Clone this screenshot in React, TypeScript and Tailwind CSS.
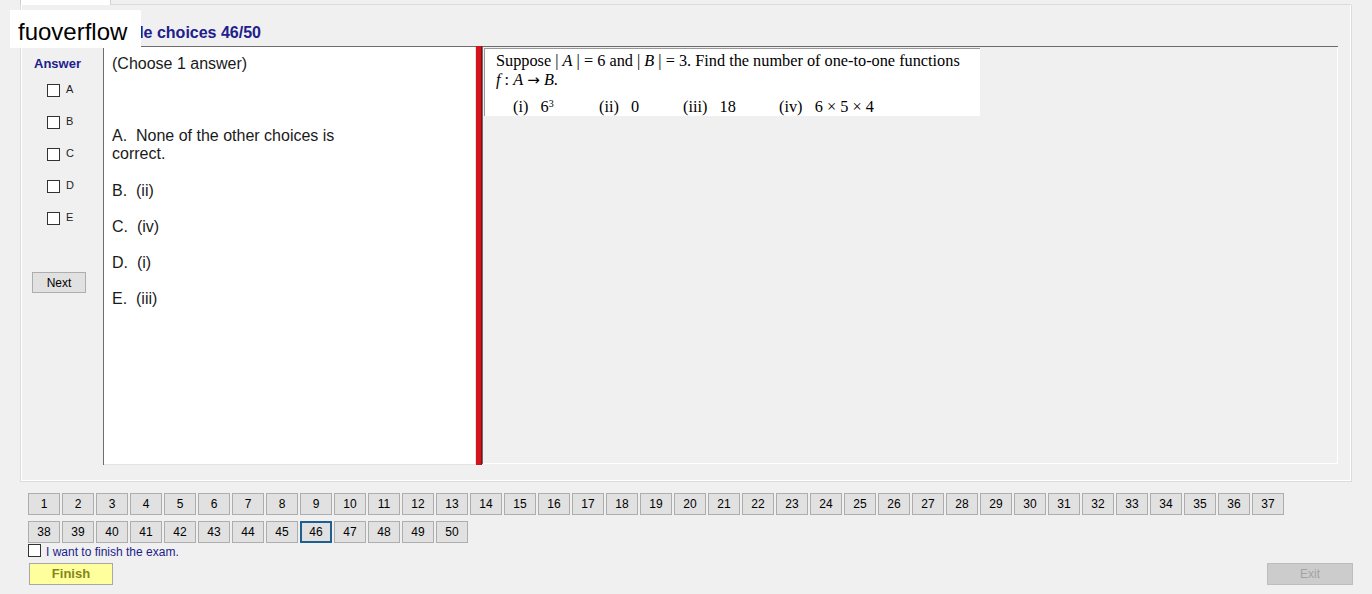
const choices = [
  { key: "A", text: "None of the other choices is correct." },
  { key: "B", text: "(ii)" },
  { key: "C", text: "(iv)" },
  { key: "D", text: "(i)" },
  { key: "E", text: "(iii)" },
];

const questions = Array.from({ length: 50 }, (_, i) => i + 1);
const current = 46;

function Box({ className = "" }: { className?: string }) {
  return (
    <span
      className={`inline-block h-[13px] w-[13px] shrink-0 border border-[#333333] bg-white ${className}`}
    />
  );
}

function NavButton({ n }: { n: number }) {
  const active = n === current;
  return (
    <button
      className={`flex h-[22px] w-[32px] items-center justify-center bg-[#e1e1e1] text-[12px] text-black ${
        active ? "border-2 border-[#1d5f8e]" : "border border-[#adadad]"
      }`}
    >
      {n}
    </button>
  );
}

function QuestionImage() {
  return (
    <div className="ml-[1px] mt-[1px] h-[68px] w-[496px] border-l border-t border-[#9a9a9a] bg-white pl-[11px] pt-[2px] font-['Liberation_Serif','Times_New_Roman',serif] text-[16.3px] leading-[19px] text-black">
      <div>
        Suppose | <i>A</i> | = 6 and | <i>B</i> | = 3. Find the number of one-to-one functions
      </div>
      <div>
        <i>f</i> : <i>A</i>{" "}
        <span className="font-['DejaVu_Sans',sans-serif] text-[15px]">→</span> <i>B</i>.
      </div>
      <div className="mt-[7px] flex pl-[17px]">
        <span className="w-[86px]">
          (i)&nbsp;&nbsp; 6<sup className="text-[10px]">3</sup>
        </span>
        <span className="w-[84px]">(ii)&nbsp;&nbsp; 0</span>
        <span className="w-[96px]">(iii)&nbsp;&nbsp; 18</span>
        <span>(iv)&nbsp;&nbsp; 6 × 5 × 4</span>
      </div>
    </div>
  );
}

export default function App() {
  return (
    <div className="relative flex h-[594px] w-[1372px] flex-col overflow-hidden bg-[#f0f0f0] font-['Liberation_Sans',Arial,sans-serif]">
      {/* tab strip */}
      <div className="flex h-[5px]">
        <div className="ml-[20px] h-full w-[91px] border-x border-[#d0d0d0] bg-white" />
        <div className="mt-auto h-[1px] w-[1240px] bg-[#dcdcdc]" />
      </div>

      {/* group box */}
      <div className="ml-[20px] flex h-[477px] w-[1332px] flex-col border border-t-0 border-[#dcdcdc] shadow-[inset_1px_0_0_#ffffff,inset_-1px_-1px_0_#ffffff]">
        <div className="h-[41px] pt-[19px]">
          <div className="w-[240px] text-right text-[16px] font-bold leading-[18px] text-[#20208c]">
            Multiple choices 46/50
          </div>
        </div>

        <div className="flex h-[419px]">
          {/* answer column */}
          <div className="flex w-[82px] flex-col">
            <div className="mt-[10px] pl-[13px] text-[13px] font-bold leading-[16px] text-[#20208c]">
              Answer
            </div>
            <div className="mt-[12px] flex flex-col gap-[19px] pl-[26px]">
              {choices.map(c => (
                <label key={c.key} className="flex items-center gap-[6px] text-[11px] leading-[13px] text-[#222222]">
                  <Box />
                  <span className="-mt-[3px]">{c.key}</span>
                </label>
              ))}
            </div>
            <button className="ml-[11px] mt-[47px] h-[21px] w-[54px] border border-[#adadad] bg-[#e1e1e1] text-[12px] text-black">
              Next
            </button>
          </div>

          {/* choices panel */}
          <div className="w-[373px] border-l border-t border-[#6d6d6d] bg-white pl-[8px] pt-[8px] text-[16px] leading-[18px] text-[#1a1a1a] shadow-[inset_-1px_-1px_0_#e3e3e3]">
            <div>(Choose 1 answer)</div>
            <div className="mt-[54px] flex flex-col gap-[18px]">
              {choices.map(c => (
                <div key={c.key} className="w-[240px] first:mb-[1px]">
                  {`${c.key}.\u00a0 ${c.text}`}
                </div>
              ))}
            </div>
          </div>

          {/* splitter */}
          <div className="w-[6px] border-r border-[#8a0a10] bg-[#d3141c]" />

          {/* question panel */}
          <div className="mb-[1px] w-[856px] border-l border-t border-[#6d6d6d] shadow-[inset_-1px_-1px_0_#ffffff]">
            <QuestionImage />
          </div>
        </div>
      </div>

      {/* question navigation */}
      <div className="ml-[28px] mt-[11px] flex w-[1260px] flex-wrap gap-x-[2px] gap-y-[6px]">
        {questions.map(n => (
          <NavButton key={n} n={n} />
        ))}
      </div>

      <label className="-mt-[2px] ml-[28px] flex items-center gap-[5px] text-[12px] leading-[14px] text-[#1c1c8a]">
        <Box className="h-[13px] w-[13px]" />
        <span className="mt-[4px]">I want to finish the exam.</span>
      </label>

      <div className="ml-[29px] mr-[19px] mt-[4px] flex items-center justify-between">
        <button className="h-[22px] w-[84px] border border-[#a8a8a8] bg-[#ffff9e] text-[13px] font-bold text-[#85851a]">
          Finish
        </button>
        <button className="h-[22px] w-[86px] border border-[#bdbdbd] bg-[#cccccc] text-[12px] text-[#a3a3a3]">
          Exit
        </button>
      </div>

      {/* watermark */}
      <div className="absolute left-[10px] top-[10px] flex h-[38px] w-[131px] items-center bg-white pl-[8px] pt-[5px] text-[24px] leading-none text-black">
        fuoverflow
      </div>
    </div>
  );
}
